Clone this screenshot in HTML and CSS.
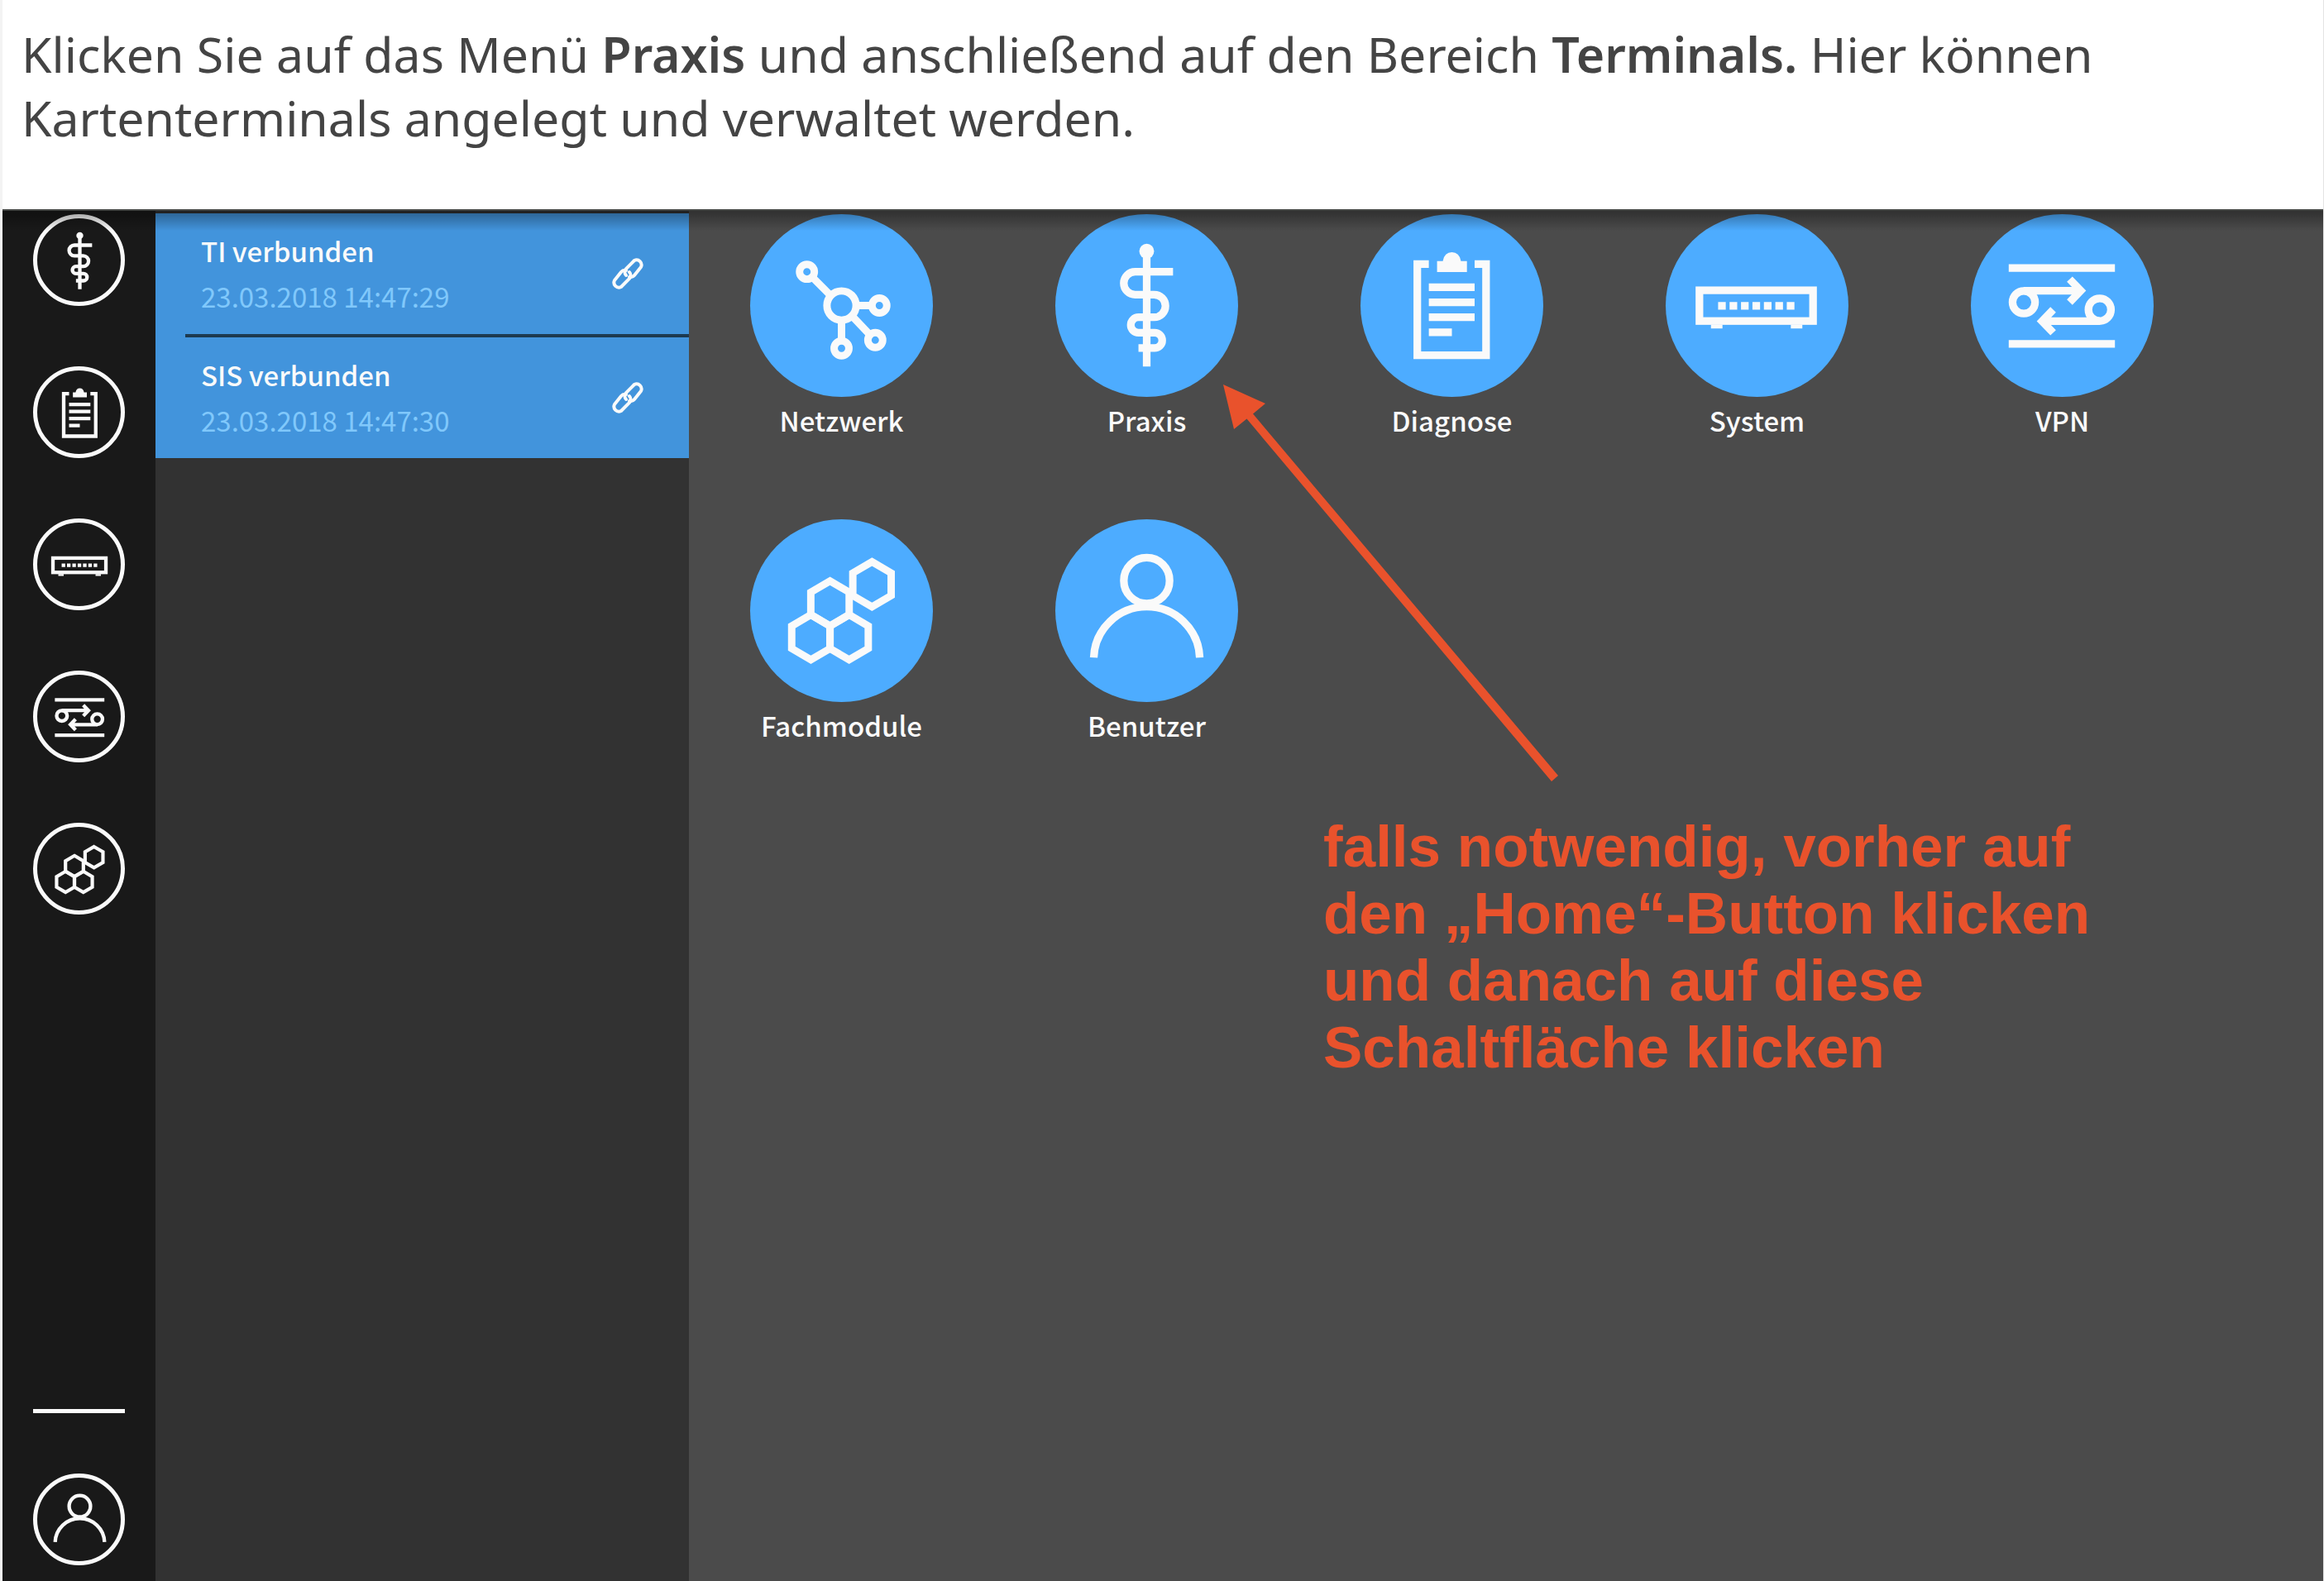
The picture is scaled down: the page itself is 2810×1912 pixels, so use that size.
FILE: index.html
```html
<!DOCTYPE html>
<html lang="de">
<head>
<meta charset="utf-8">
<title>Kartenterminals verwalten</title>
<meta name="viewport" content="width=device-width, initial-scale=1">
<link rel="stylesheet" href="styles.css">
</head>
<body>
<svg class="sprite" aria-hidden="true">
  <symbol id="network" viewBox="0 0 222 222">
    <g fill="none" stroke="currentColor" stroke-width="9">
      <circle cx="69" cy="70" r="9"/><circle cx="111" cy="111" r="17.7"/><circle cx="157" cy="111" r="9"/>
      <circle cx="152" cy="153" r="9"/><circle cx="111" cy="163" r="9"/>
      <path d="M76 77l22 22M129 111h19M124 124l21 22M111 129v25"/>
    </g>
  </symbol>
  <symbol id="practice" viewBox="0 0 222 222">
    <circle cx="111" cy="45" r="9" fill="currentColor"/>
    <path fill="none" stroke="currentColor" stroke-width="9.3" d="M111 45V185M143 70H97a13.8 13.8 0 0 0 0 27.7H120a13.8 13.8 0 0 1 0 27.6H101a9.3 9.3 0 0 0 0 18.7H120.5a9.3 9.3 0 0 1 0 18.7H101"/>
  </symbol>
  <symbol id="clipboard" viewBox="0 0 222 222">
    <path fill="none" stroke="currentColor" stroke-width="9.3" d="M83 60.6H69V171.3H152.5V60.6H138.6M83 88.7H138.6M83 107H138.6M83 125.3H138.6M83 143.5H111"/>
    <path fill="currentColor" d="M93 70.3V57H100Q102 46.3 111 46.3Q120 46.3 122 57H129.3V70.3Z"/>
  </symbol>
  <symbol id="system" viewBox="0 0 222 222">
    <rect x="41" y="92.5" width="138" height="37.3" fill="none" stroke="currentColor" stroke-width="9.3"/>
    <path fill="currentColor" d="M55 134h14v5h-14zM152 134h14v5h-14z"/>
    <path fill="none" stroke="currentColor" stroke-width="9.3" stroke-dasharray="9.3 4.6" d="M63.7 111.3H157"/>
  </symbol>
  <symbol id="vpn" viewBox="0 0 222 222">
    <g fill="none" stroke="currentColor" stroke-width="9.3">
      <path d="M46 65.3H175M46 157.7H175M64 93H132M157 130H88M120 79l13.5 14-13.5 14M100 116l-13.5 14 13.5 14"/>
      <circle cx="64.3" cy="107" r="13.7"/><circle cx="156.5" cy="116" r="13.7"/>
    </g>
    <path fill="currentColor" d="M124 84l10 9-10 9zM96 121l-10 9 10 9z"/>
  </symbol>
  <symbol id="modules" viewBox="0 0 222 222">
    <g fill="none" stroke="currentColor" stroke-width="9">
      <path d="M148 51.7l23.3 13.6v27.4l-23.3 13.6-23.3-13.6v-27.4z"/>
      <path d="M97 75l23.3 13.6v27.4l-23.3 13.6-23.3-13.6v-27.4z"/>
      <path d="M73.8 116l23.3 13.6v27.4l-23.3 13.6-23.3-13.6v-27.4z"/>
      <path d="M120.2 116l23.3 13.6v27.4l-23.3 13.6-23.3-13.6v-27.4z"/>
    </g>
  </symbol>
  <symbol id="user" viewBox="0 0 222 222">
    <g fill="none" stroke="currentColor" stroke-width="9.3">
      <circle cx="111" cy="74.5" r="27.8"/><path d="M46.7 168a64.4 64.4 0 0 1 128.7 0"/>
    </g>
  </symbol>
  <symbol id="link" viewBox="0 0 40 40">
    <g fill="none" stroke="currentColor" stroke-width="4" stroke-linecap="round">
      <path d="M18 22a6 6 0 0 1 0-8l10-10a6 6 0 0 1 8 8l-8 10a6 6 0 0 1-6 2"/>
      <path d="M22 18a6 6 0 0 1 0 8l-10 10a6 6 0 0 1-8-8l8-10a6 6 0 0 1 6-2"/>
    </g>
  </symbol>
</svg>

<div class="page">
  <header class="intro">
    <p>Klicken Sie auf das Menü <strong>Praxis</strong> und anschließend auf den Bereich <strong>Terminals.</strong> Hier können Kartenterminals angelegt und verwaltet werden.</p>
  </header>
  <div class="app">
    <nav class="rail" aria-label="Hauptmenü">
      <button class="rail-button" type="button" aria-label="Praxis"><svg><use href="#practice"/></svg></button>
      <button class="rail-button" type="button" aria-label="Diagnose"><svg><use href="#clipboard"/></svg></button>
      <button class="rail-button" type="button" aria-label="System"><svg><use href="#system"/></svg></button>
      <button class="rail-button" type="button" aria-label="VPN"><svg><use href="#vpn"/></svg></button>
      <button class="rail-button" type="button" aria-label="Fachmodule"><svg><use href="#modules"/></svg></button>
      <hr class="rail-divider">
      <button class="rail-button" type="button" aria-label="Benutzer"><svg><use href="#user"/></svg></button>
    </nav>
    <aside class="status">
      <ul class="status-list">
        <li class="status-item">
          <div><div class="status-name">TI verbunden</div><time class="status-time">23.03.2018 14:47:29</time></div>
          <svg class="status-icon"><use href="#link"/></svg>
        </li>
        <li class="status-item">
          <div><div class="status-name">SIS verbunden</div><time class="status-time">23.03.2018 14:47:30</time></div>
          <svg class="status-icon"><use href="#link"/></svg>
        </li>
      </ul>
    </aside>
    <main class="home">
      <div class="tiles">
        <button class="tile" type="button"><svg class="tile-icon"><use href="#network"/></svg>Netzwerk</button>
        <button class="tile" type="button"><svg class="tile-icon"><use href="#practice"/></svg>Praxis</button>
        <button class="tile" type="button"><svg class="tile-icon"><use href="#clipboard"/></svg>Diagnose</button>
        <button class="tile" type="button"><svg class="tile-icon"><use href="#system"/></svg>System</button>
        <button class="tile" type="button"><svg class="tile-icon"><use href="#vpn"/></svg>VPN</button>
        <button class="tile" type="button"><svg class="tile-icon"><use href="#modules"/></svg>Fachmodule</button>
        <button class="tile" type="button"><svg class="tile-icon"><use href="#user"/></svg>Benutzer</button>
      </div>
      <p class="note">falls notwendig, vorher auf den „Home“-Button klicken und danach auf diese Schaltfläche klicken</p>
      <svg class="arrow" viewBox="0 0 410 490" aria-hidden="true">
        <path d="M0 0L51 23L36 35.5L405 473L397 480L28.5 41.5L13 54Z" fill="currentColor"/>
      </svg>
    </main>
  </div>
</div>
</body>
</html>
```
FILE: styles.css
```css
* { box-sizing: border-box; }

body {
  margin: 0;
  background: #fff;
  font-family: "Noto Sans CJK SC", "Noto Sans", sans-serif;
}

button {
  border: 0;
  padding: 0;
  background: none;
  color: inherit;
  font: inherit;
}

.sprite {
  position: absolute;
  width: 0;
  height: 0;
}

.page {
  display: flex;
  flex-direction: column;
  min-height: 100vh;
  border-left: 3px solid #f3f3f3;
  border-right: 1px solid #e4e4e4;
}

.intro {
  padding: 27px 23px 72px;
  color: #444;
  font: 59px/77px "Noto Sans", "Open Sans", sans-serif;
}

.intro p { margin: 0; }

.intro strong { font-weight: 600; }

.app {
  position: relative;
  display: grid;
  flex: 1;
  grid-template-columns: 185px 645px 1fr;
  color: #fafafa;
}

.app::before {
  content: "";
  position: absolute;
  inset: 0 0 auto;
  z-index: 1;
  height: 24px;
  border-top: 2px solid #444644;
  background: linear-gradient(rgba(0, 0, 0, .36), rgba(0, 0, 0, 0));
  pointer-events: none;
}

.rail {
  display: flex;
  flex-direction: column;
  align-items: center;
  gap: 73px;
  padding: 6px 0 19px;
  background: #191919;
}

.rail-button {
  display: grid;
  place-items: center;
  width: 111px;
  height: 111px;
  border: 5px solid;
  border-radius: 50%;
}

.rail-button svg {
  width: 103px;
  height: 103px;
}

.rail-divider {
  width: 111px;
  height: 5px;
  margin: auto 0 0;
  border: 0;
  background: #fafafa;
}

.status {
  padding-top: 5px;
  background: #323232;
}

.status-list {
  margin: 0;
  padding: 0;
  background: #4294dc;
  list-style: none;
}

.status-item {
  display: flex;
  align-items: center;
  justify-content: space-between;
  margin-left: 36px;
  padding: 18px 54px 18px 19px;
  font-size: 33px;
  line-height: 55px;
}

.status-item + .status-item { border-top: 4px solid #1d3a50; }

.status-name { font-weight: 500; }

.status-time {
  display: block;
  color: #80c8fb;
}

.status-icon {
  width: 40px;
  height: 40px;
}

.home {
  position: relative;
  padding: 6px 74px 0;
  background: #4b4b4b;
}

.tiles {
  display: flex;
  flex-wrap: wrap;
  gap: 92px 148px;
}

.tile {
  display: flex;
  flex-direction: column;
  align-items: center;
  width: 221px;
  font-size: 33px;
  font-weight: 500;
  line-height: 56px;
}

.tile-icon {
  width: 221px;
  height: 221px;
  border-radius: 50%;
  background: #4dacff;
}

.note {
  max-width: 960px;
  margin: 78px 0 0 693px;
  color: #e9522c;
  font: bold 71px/81px "Liberation Sans", Arial, sans-serif;
}

.arrow {
  position: absolute;
  top: 212px;
  left: 646px;
  width: 410px;
  height: 490px;
  color: #e9522c;
}
```
